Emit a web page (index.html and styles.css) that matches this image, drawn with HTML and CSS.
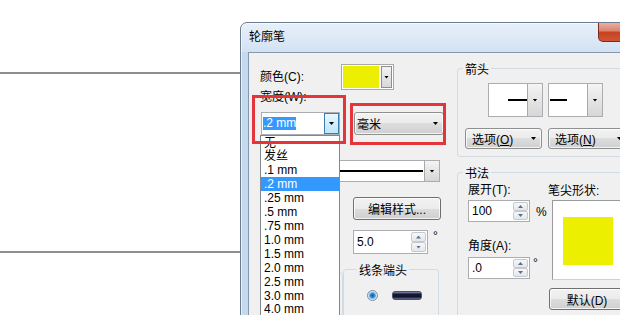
FILE: index.html
```html
<!DOCTYPE html>
<html>
<head>
<meta charset="utf-8">
<link rel="stylesheet" href="styles.css">
</head>
<body>
<div class="desk">
  <div class="hline"></div>
  <div class="hline hline-2"></div>
  <div class="window">
    <div class="titlebar">轮廓笔</div>
    <div class="close"></div>
    <div class="client">
      <div class="left">
        <div class="row row-color">
          <span class="lbl lbl-color">颜色(C):</span>
          <div class="swatch"><span class="swatch-fill"></span><span class="swatch-btn"><i class="tri"></i></span></div>
        </div>
        <div class="lbl lbl-width">宽度(W):</div>
        <div class="row row-width">
          <div class="ecombo w-combo"><div class="efield"><span class="sel">.2 mm</span></div><div class="ebtn ebtn-hot"><i class="tri"></i></div></div>
          <div class="dcombo units"><span class="dtext">毫米</span><i class="tri"></i></div>
        </div>
        <div class="ecombo style-combo"><div class="efield"><span class="line-sample"></span></div><div class="ebtn"><i class="tri"></i></div></div>
        <div class="btn edit-btn">编辑样式...</div>
        <div class="row row-miter">
          <div class="spin spin-miter"><span class="sval">5.0</span><span class="sbtns"><span class="sb sb-up"></span><span class="sb sb-dn"></span></span></div>
          <span class="deg">°</span>
        </div>
        <div class="row row-groups">
          <div class="grp grp-hidden"></div>
          <fieldset class="grp grp-caps">
            <legend>线条端头</legend>
            <div class="row cap-row"><span class="radio"></span><span class="cap"></span></div>
          </fieldset>
        </div>
      </div>
      <div class="right">
        <fieldset class="grp grp-arrows">
          <legend>箭头</legend>
          <div class="row arrow-row">
            <div class="ecombo arrow-combo"><div class="efield ef-end"><span class="aline"></span></div><div class="ebtn"><i class="tri"></i></div></div>
            <div class="ecombo arrow-combo"><div class="efield"><span class="aline aline-2"></span></div><div class="ebtn"><i class="tri"></i></div></div>
          </div>
          <div class="row opt-row">
            <div class="dcombo opt opt-1"><span class="dtext">选项(<u>O</u>)</span><i class="tri"></i></div>
            <div class="dcombo opt opt-2"><span class="dtext">选项(<u>N</u>)</span><i class="tri"></i></div>
          </div>
        </fieldset>
        <fieldset class="grp grp-calli">
          <legend>书法</legend>
          <div class="calli">
            <div class="ccol ccol-1">
              <div class="lbl lbl-spread">展开(T):</div>
              <div class="row spin-row spin-row-1">
                <div class="spin spin-sm"><span class="sval">100</span><span class="sbtns"><span class="sb sb-up"></span><span class="sb sb-dn"></span></span></div>
                <span class="pct">%</span>
              </div>
              <div class="lbl lbl-angle">角度(A):</div>
              <div class="row spin-row spin-row-2">
                <div class="spin spin-sm"><span class="sval">.0</span><span class="sbtns"><span class="sb sb-up"></span><span class="sb sb-dn"></span></span></div>
                <span class="deg deg-2">°</span>
              </div>
            </div>
            <div class="ccol ccol-2">
              <div class="lbl lbl-nib">笔尖形状:</div>
              <div class="nib"><span class="nib-fill"></span></div>
              <div class="btn def-btn">默认(D)</div>
            </div>
          </div>
        </fieldset>
      </div>

      <div class="droplist">
        <div class="item item-cjk">无</div>
        <div class="item item-cjk">发丝</div>
        <div class="item">.1 mm</div>
        <div class="item item-sel">.2 mm</div>
        <div class="item">.25 mm</div>
        <div class="item">.5 mm</div>
        <div class="item">.75 mm</div>
        <div class="item">1.0 mm</div>
        <div class="item">1.5 mm</div>
        <div class="item">2.0 mm</div>
        <div class="item">2.5 mm</div>
        <div class="item">3.0 mm</div>
        <div class="item item-last">4.0 mm</div>
      </div>
      <div class="redbox redbox-1"></div>
      <div class="redbox redbox-2"></div>
    </div>
  </div>
</div>
</body>
</html>
```

FILE: styles.css
```css
* { box-sizing: border-box; }
html, body { margin: 0; padding: 0; }
body {
  width: 620px; height: 315px; overflow: hidden; background: #fff;
  font-family: "Liberation Sans", "Noto Sans CJK SC", sans-serif;
  font-size: 12px; color: #000;
}
.desk { position: relative; width: 620px; height: 315px; padding-top: 72px; overflow: hidden; }
.hline { width: 240px; height: 2px; background: #8e8e8e; }
.hline-2 { margin-top: 177px; }

.window {
  position: absolute; left: 240px; top: 22px; width: 420px; height: 330px;
  border: 1px solid #6b7c91; border-radius: 7px 7px 0 0; padding: 0 7px;
  background: linear-gradient(to bottom, #e8f0f9 0, #d2e2f3 29px, #c4d8ee 29px, #c4d8ee 100%);
  box-shadow: inset 0 0 0 1px rgba(255,255,255,.6);
  display: flex; flex-direction: column;
}
.titlebar { flex: none; height: 29px; line-height: 29px; padding-left: 1px; color: #000; }
.close {
  position: absolute; left: 357px; top: 0; width: 45px; height: 19px;
  border: 1px solid #7a2a1c; border-top: none; border-radius: 0 0 5px 5px;
  background: linear-gradient(to bottom, #eab0a2 0, #dc826c 45%, #c5421f 50%, #cf5536 100%);
}
.client {
  position: relative; flex: 1; display: flex;
  border: 1px solid #8597ad; background: #f0f0f0;
}

.row { display: flex; }
.lbl { line-height: 14px; white-space: nowrap; }

/* left part */
.left { flex: none; width: 208px; padding-left: 11px; }
.row-color { margin-top: 11px; height: 26px; align-items: center; }
.lbl-color { width: 81px; }
.swatch {
  display: flex; width: 53px; height: 26px; padding: 1px; gap: 2px;
  border: 1px solid #a9a9a9; background: #fff;
}
.swatch-fill { width: 36px; background: #ecf000; }
.swatch-btn {
  flex: 1; display: flex; align-items: center; justify-content: center;
  border: 1px solid #8d8d8d; background: linear-gradient(#f3f3f3, #d8d8d8);
}
.tri {
  display: block; width: 5px; height: 3px; background: #000;
  clip-path: polygon(0 0, 100% 0, 50% 100%);
}
.lbl-width { margin-top: 0; }
.row-width { margin-top: 8px; height: 23px; }

.ecombo { display: flex; height: 23px; border: 1px solid #abadb3; background: #fff; }
.efield { flex: 1; display: flex; align-items: center; }
.ebtn {
  flex: none; width: 15px; display: flex; align-items: center; justify-content: center;
  border-left: 1px solid #a9a9a9; background: linear-gradient(#f4f4f4, #d6d6d6);
}
.ebtn-hot { border: 1px solid #3c7fb1; background: linear-gradient(#eaf6fd, #bee6fd); }
.w-combo { margin-left: 1px; width: 79px; }
.w-combo .efield { padding-left: 1px; }
.sel { background: #3399ff; color: #fff; line-height: 13px; }

.dcombo, .btn {
  display: flex; align-items: center; height: 23px;
  border: 1px solid #8e8f8f; border-radius: 3px;
  background: linear-gradient(to bottom, #f2f2f2 0, #ebebeb 50%, #dddddd 50%, #cfcfcf 100%);
  box-shadow: inset 0 0 0 1px rgba(255,255,255,.75);
  white-space: nowrap;
}
.dcombo { justify-content: space-between; padding: 0 5px 0 2px; }
.btn { justify-content: center; border-color: #707070; }
.units { margin-left: 14px; width: 90px; }

.style-combo { margin-top: 25px; margin-left: 1px; width: 179px; height: 22px; }
.line-sample { flex: 1; height: 2px; margin: 0 1px 0 2px; background: #000; }
.edit-btn { margin-top: 15px; margin-left: 93px; width: 88px; }

.row-miter { margin-top: 10px; height: 24px; }
.spin { display: flex; border: 1px solid #abadb3; background: #fff; }
.spin-miter { margin-left: 93px; width: 75px; height: 24px; }
.sval { flex: 1; padding-left: 3px; align-self: center; line-height: 14px; }
.sbtns { flex: none; width: 16px; display: flex; flex-direction: column; padding: 1px 1px 1px 0; }
.sb {
  flex: 1; display: flex; align-items: center; justify-content: center;
  border: 1px solid #c6c9cf; border-radius: 2px; background: linear-gradient(#f7f7f7, #e4e6ea);
}
.sb::after {
  content: ""; display: block; width: 5px; height: 3px; background: #56708f;
}
.sb-up::after { clip-path: polygon(50% 0, 100% 100%, 0 100%); }
.sb-dn::after { clip-path: polygon(0 0, 100% 0, 50% 100%); }
.deg { margin-left: 5px; line-height: 12px; align-self: flex-start; }

.row-groups { margin-top: 6px; align-items: flex-start; }
.grp { border: 1px solid #d3dbe2; border-radius: 3px; }
fieldset.grp { margin: 0; padding: 0; min-width: 0; }
fieldset.grp legend { padding: 4px 2px 0; margin-left: 5px; line-height: 14px; }
.grp-hidden { margin-top: 12px; margin-left: 2px; width: 81px; height: 60px; }
.grp-caps { margin-left: 8px; width: 96px; height: 70px; }
.grp-caps legend { margin-left: 13px !important; }
.cap-row { margin-top: 12px; align-items: center; }
.radio {
  margin-left: 23px; width: 11px; height: 11px; border-radius: 50%;
  border: 1px solid #7a8a9c;
  background: radial-gradient(circle at 50% 50%, #1a5a9a 0, #2f86d0 2px, #6fb2e6 3px, #cfe5f7 4px, #eef4fa 5px);
}
.cap {
  margin-left: 14px; width: 30px; height: 9px; border-radius: 3px;
  border: 1px solid #4a5270;
  background: linear-gradient(#8a90a8 0, #161a36 30%, #0e1230 70%, #6a7090 100%);
}

/* right part */
.right { flex: none; width: 220px; }
.grp-arrows { margin-top: 6px !important; width: 200px; padding-bottom: 7px !important; }
.arrow-row { margin-top: 6px; padding-left: 30px; gap: 5px; }
.arrow-combo { width: 55px; height: 34px; }
.ef-end { justify-content: flex-end; }
.aline { width: 19px; height: 2px; background: #000; }
.aline-2 { width: 17px; margin-left: 1px; }
.opt-row { margin-top: 11px; padding-left: 7px; gap: 6px; }
.opt { height: 21px; padding: 0 5px 0 6px; }
.opt-1 { width: 77px; }
.opt-2 { width: 80px; }

.grp-calli { margin-top: 6px !important; width: 200px; height: 170px; }
.calli { display: flex; padding-left: 10px; }
.ccol-1 { width: 80px; }
.lbl-spread { margin-top: 2px; }
.spin-row { align-items: center; }
.spin-row-1 { margin-top: 3px; }
.spin-sm { width: 62px; height: 22px; }
.pct { margin-left: 6px; margin-top: 2px; }
.lbl-angle { margin-top: 17px; }
.spin-row-2 { margin-top: 4px; }
.deg-2 { margin-left: 3px; }
.lbl-nib { margin-top: 3px; }
.nib {
  margin-top: 2px; margin-left: 4px; width: 72px; height: 80px;
  padding: 16px 0 0 10px; background: #fff;
  border: 1px solid; border-color: #9a9a9a #dadada #cfcfcf #9a9a9a;
}
.nib-fill { display: block; width: 50px; height: 48px; background: #ecf000; }
.def-btn { margin-top: 8px; margin-left: 1px; width: 76px; height: 22px; }

/* overlays */
.droplist {
  position: absolute; left: 11px; top: 82px; width: 80px; height: 200px;
  border: 1px solid #828790; background: #fff; padding-top: 1px;
}
.item { height: 14px; line-height: 14px; padding-left: 3px; white-space: nowrap; }
.item-cjk { height: 13px; line-height: 13px; }
.item-last { height: 12px; line-height: 12px; }
.item-sel { background: #3399ff; color: #fff; }
.redbox { position: absolute; border: 3px solid #e5343a; }
.redbox-1 { left: 3px; top: 42px; width: 94px; height: 49px; }
.redbox-2 { left: 101px; top: 50px; width: 96px; height: 42px; }
```
